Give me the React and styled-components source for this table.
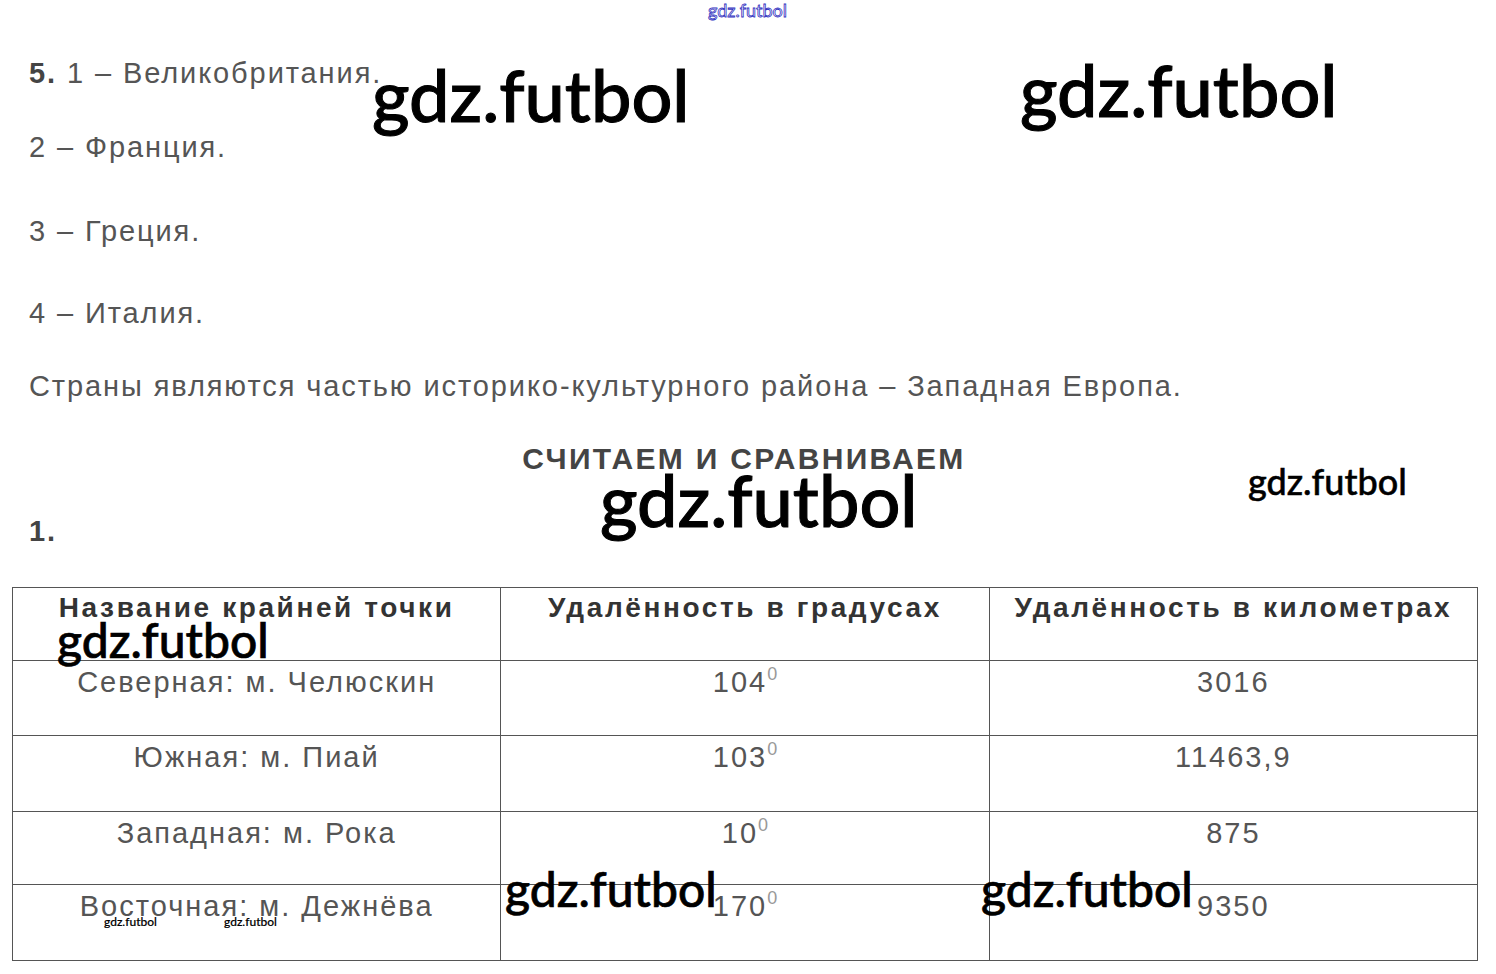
import styled, { createGlobalStyle } from "styled-components";

const GlobalStyle = createGlobalStyle`
  html, body {
    margin: 0;
    padding: 0;
    background: #fff;
  }
`;

const Page = styled.div`
  position: relative;
  width: 1496px;
  height: 974px;
  overflow: hidden;
  background: #fff;
  font-family: "Liberation Sans", Arial, sans-serif;
`;

const Content = styled.div`
  display: flex;
  flex-direction: column;
  padding-top: 55px;
`;

const Line = styled.div`
  margin-top: ${(p) => p.$gap || 0}px;
  padding-left: 29px;
  height: 36px;
  line-height: 36px;
  font-size: 29px;
  letter-spacing: 1.9px;
  color: #555;
  white-space: nowrap;
`;

const Num = styled.b`
  color: #444;
`;

const Heading = styled.div`
  margin-top: ${(p) => p.$gap}px;
  height: 36px;
  line-height: 36px;
  text-align: center;
  padding-right: 8px;
  font-size: 30px;
  font-weight: 700;
  letter-spacing: 2.3px;
  color: #444;
`;

const Table = styled.table`
  margin: 38px 0 0 12px;
  width: 1466px;
  border-collapse: collapse;
  table-layout: fixed;
`;

const Th = styled.th`
  border: 1.5px solid #555;
  height: 70px;
  padding: 2px 0 0;
  vertical-align: top;
  font-size: 28px;
  font-weight: 700;
  letter-spacing: 2.6px;
  color: #333;
  line-height: 36px;
  white-space: nowrap;
`;

const Td = styled.td`
  border: 1.5px solid #555;
  height: ${(p) => p.$h}px;
  padding: 3px 0 0;
  vertical-align: top;
  text-align: center;
  font-size: 29px;
  letter-spacing: 2px;
  color: #555;
  line-height: 36px;
`;

const Deg = styled.sup`
  font-size: 18px;
  color: #999;
  letter-spacing: 0;
  vertical-align: 12px;
  line-height: 0;
`;

const Mark = styled.div`
  position: absolute;
  left: ${(p) => p.$x}px;
  top: ${(p) => p.$y}px;
  font-family: Lato, "Noto Sans", sans-serif;
  font-size: ${(p) => p.$size}px;
  font-weight: 500;
  line-height: 1;
  color: #000;
  -webkit-text-stroke: ${(p) => p.$size / 70}px #000;
  white-space: nowrap;
`;

const TopMark = styled.div`
  position: absolute;
  left: 708px;
  top: 1px;
  font-family: Lato, "Noto Sans", sans-serif;
  font-size: 18px;
  line-height: 1;
  color: #fff;
  -webkit-text-stroke: 0.8px #3030c0;
`;

const rows = [
  ["Северная: м. Челюскин", "104", "3016", 71],
  ["Южная: м. Пиай", "103", "11463,9", 72],
  ["Западная: м. Рока", "10", "875", 69],
  ["Восточная: м. Дежнёва", "170", "9350", 72],
];

const marks = [
  [372, 58, 72],
  [1020, 53, 72],
  [600, 463, 72],
  [1248, 463, 36],
  [57, 616, 48],
  [505, 865, 48],
  [981, 865, 48],
  [104, 916, 12],
  [224, 916, 12],
];

export default function App() {
  return (
    <Page>
      <GlobalStyle />
      <Content>
        <Line>
          <Num>5.</Num> 1 – Великобритания.
        </Line>
        <Line $gap={38}>2 – Франция.</Line>
        <Line $gap={48}>3 – Греция.</Line>
        <Line $gap={46}>4 – Италия.</Line>
        <Line $gap={37}>
          Страны являются частью историко-культурного района – Западная Европа.
        </Line>
        <Heading $gap={37}>СЧИТАЕМ И СРАВНИВАЕМ</Heading>
        <Line $gap={36}>
          <Num>1.</Num>
        </Line>
        <Table>
          <thead>
            <tr>
              <Th>Название крайней точки</Th>
              <Th>Удалённость в градусах</Th>
              <Th>Удалённость в километрах</Th>
            </tr>
          </thead>
          <tbody>
            {rows.map(([name, deg, km, h]) => (
              <tr key={name}>
                <Td $h={h}>{name}</Td>
                <Td $h={h}>
                  {deg}
                  <Deg>0</Deg>
                </Td>
                <Td $h={h}>{km}</Td>
              </tr>
            ))}
          </tbody>
        </Table>
      </Content>
      <TopMark>gdz.futbol</TopMark>
      {marks.map(([x, y, s], i) => (
        <Mark key={i} $x={x} $y={y} $size={s}>
          gdz.futbol
        </Mark>
      ))}
    </Page>
  );
}
